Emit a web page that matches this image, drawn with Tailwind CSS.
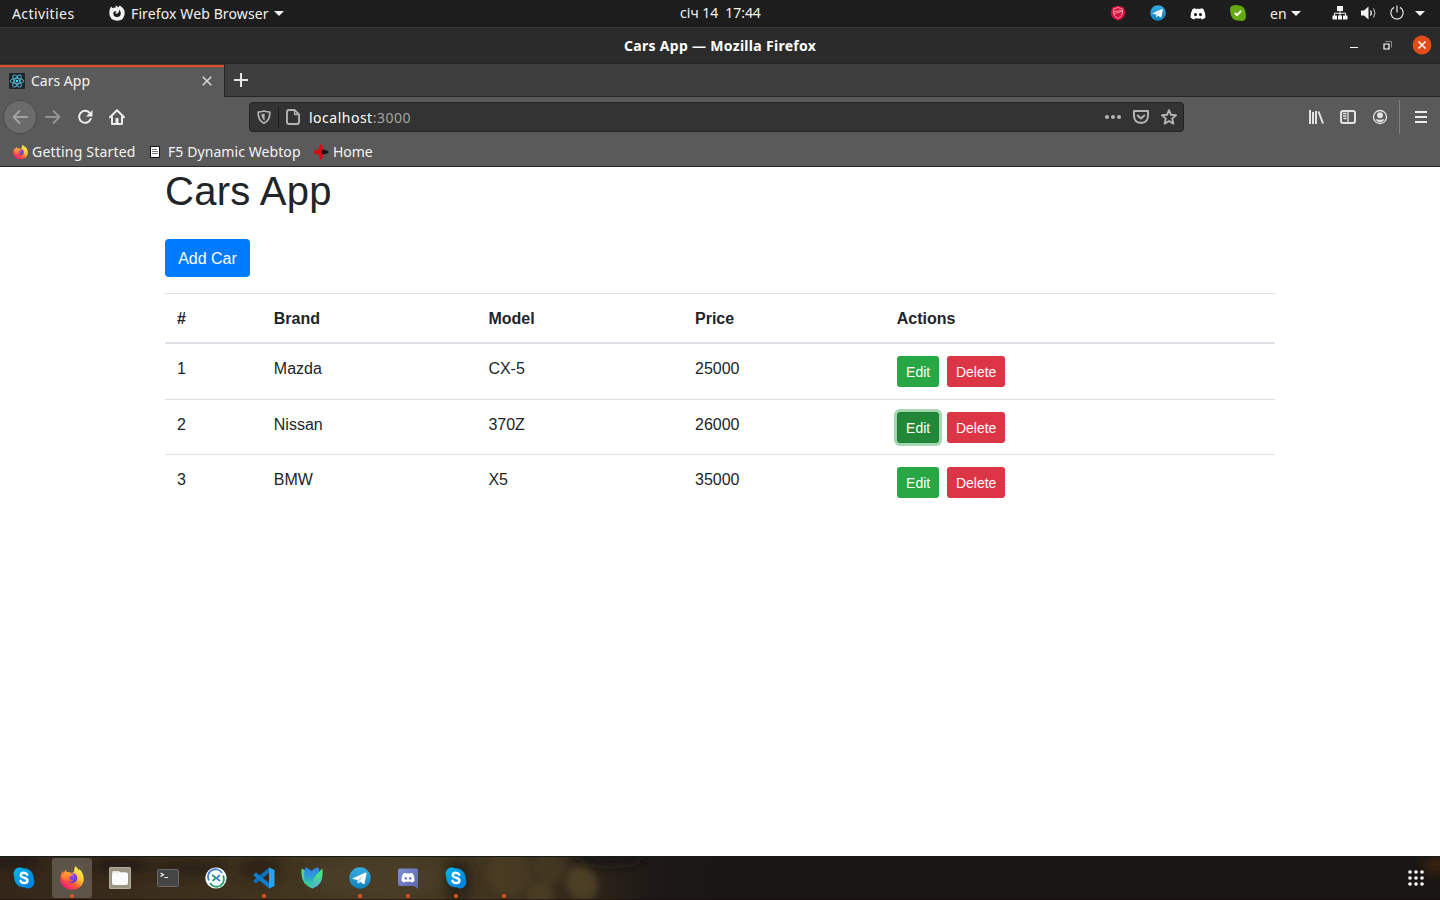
<!DOCTYPE html>
<html lang="en">
<head>
<meta charset="utf-8">
<title>Cars App</title>
<script src="https://cdn.jsdelivr.net/npm/@tailwindcss/browser@4"></script>
</head>
<body class="w-[1440px] h-[900px] overflow-hidden bg-white flex flex-col font-['Noto_Sans',sans-serif] text-[14px] leading-5 whitespace-nowrap">

<!-- Shared gradients and symbols -->
<svg width="0" height="0" class="absolute">
  <defs>
    <linearGradient id="ffBody" x1="0.85" y1="0.1" x2="0.2" y2="0.95"><stop offset="0" stop-color="#fff04a"/><stop offset=".35" stop-color="#ffc52f"/><stop offset=".65" stop-color="#ff5a36"/><stop offset="1" stop-color="#f0197d"/></linearGradient>
    <radialGradient id="ffGlobe" cx=".5" cy=".3" r=".7"><stop offset="0" stop-color="#a14bef"/><stop offset="1" stop-color="#4f3fc4"/></radialGradient>
    <linearGradient id="ffHead" x1="0" y1="0" x2="0" y2="1"><stop offset="0" stop-color="#ffa436"/><stop offset=".5" stop-color="#ff7a30"/><stop offset="1" stop-color="#f5305f"/></linearGradient>
    <linearGradient id="tg" x1="0" y1="0" x2="0" y2="1"><stop offset="0" stop-color="#37aee2"/><stop offset="1" stop-color="#0f82bd"/></linearGradient>
    <linearGradient id="sk" x1="0" y1="0" x2="1" y2="1"><stop offset="0" stop-color="#00b7f0"/><stop offset="1" stop-color="#0078d4"/></linearGradient>
    <linearGradient id="leafA" x1="0" y1="0" x2="0" y2="1"><stop offset="0" stop-color="#2f80f0"/><stop offset=".45" stop-color="#2f9fd0"/><stop offset="1" stop-color="#3fe08a"/></linearGradient>
    <linearGradient id="leafB" x1="0" y1="0" x2="0" y2="1"><stop offset="0" stop-color="#4be37c"/><stop offset="1" stop-color="#38c8a0"/></linearGradient>
    <linearGradient id="leafC" x1="0" y1="0" x2="0" y2="1"><stop offset="0" stop-color="#4be37c"/><stop offset=".4" stop-color="#4bdc8c"/><stop offset="1" stop-color="#5aa8f0"/></linearGradient>
    <linearGradient id="dc" x1="0" y1="0" x2="1" y2="1"><stop offset="0" stop-color="#7f8fd0"/><stop offset="1" stop-color="#5a63b0"/></linearGradient>
  </defs>
  <symbol id="firefox" viewBox="0 0 24 24">
    <path fill="url(#ffBody)" d="M15.500.300c2.200 1.500 3 3.400 3.400 4.600 0-.8.100-1.500.2-2 2.700 2 4.700 5.800 4.600 10.300C23.600 19.300 18.600 23.700 12 23.700 5.500 23.700.5 19.300.3 13.200c0-3.200 1-6.200 2.700-8.100.1 1 .2 1.500.5 2C4.100 5.700 5.200 4.600 6.200 4c-.1 1 .1 1.800.6 2.500 1-.3 2.300-.3 3.300.1C11.400 7 14 6.800 14 5.200c.1-1.700.6-3.600 1.500-4.900z"/>
    <circle cx="12.300" cy="12" r="5" fill="url(#ffGlobe)"/>
    <path fill="url(#ffHead)" d="M1.300 9.500C2.500 8 5 6.400 7.500 6.500c1.500 0 2.400.8 3.500 1.100 1 .2 2.200.2 3.200.2-1 1.500-2.700 1.900-3.600 2.300-1.300.6-1.500 1.900-.8 2.900.8 1.100 2.200 1.300 3.600.9-1.200 1.700-3.400 2-5 1 .8 1.500 2.500 2.300 4.200 2.200C7 19.500 2 15 1.300 9.500z"/>
  </symbol>
  <symbol id="skype" viewBox="0 0 22 22">
    <path fill="url(#sk)" d="M6.500.5C8 .5 9 1 9.800 1.300c6-.6 11.200 4.200 10.800 10.200C22.800 16 20 21.500 15.500 21.500c-1.400 0-2.500-.4-3.400-.9C6 21 1 16.300 1.300 10.300-.8 5.800 2 .5 6.500.5z"/>
    <path fill="none" stroke="#fff" stroke-width="2.500" stroke-linecap="round" d="M14.200 7.700c-.7-1.300-2-1.900-3.400-1.900-1.700 0-3 .9-3 2.400 0 3.300 6.600 1.900 6.600 5.300 0 1.700-1.500 2.600-3.300 2.600-1.600 0-3-.7-3.600-2.200"/>
  </symbol>
  <symbol id="telegram" viewBox="0 0 22 22">
    <circle cx="11" cy="11" r="10.700" fill="url(#tg)"/>
    <path fill="#fff" d="M3.800 11.200 16.600 5.600c.6-.2 1 .1.900.8l-1.900 10c-.1.700-.7.900-1.300.5l-3.100-2.200-1.700 1.700c-.4.300-.8.100-.8-.4l-.2-3-4.600-1.100c-.6-.2-.6-.5-.1-.7z"/>
    <path fill="#bcd9ea" d="m8.500 13 6.600-4.900-4.600 5.800-1.400 2.700z"/>
  </symbol>
  <symbol id="discord" viewBox="0 0 16 12">
    <path fill-rule="evenodd" d="M5.200.3 5.700 1q2.300-.4 4.600 0l.5-.7q1.500.1 2.700.9 2.200 3.800 2 8.300-1.500 1.700-3.700 2l-.9-1.300q-2.900.8-5.800 0l-.9 1.300q-2.200-.3-3.700-2-.2-4.500 2-8.300Q3.700.4 5.200.3zM5.500 5a1.500 1.600 0 1 0 .01 0zM10.500 5a1.500 1.600 0 1 0 .01 0z"/>
  </symbol>
</svg>

<!-- GNOME top bar -->
<header class="h-[28px] shrink-0 bg-[#1d1d1d] border-b border-[#3b3b3b] flex items-center text-[#f2f2f2]">
  <div class="w-[680px] flex items-center pl-3">
    <span class="w-[97px] tracking-[0.42px]">Activities</span>
    <svg class="w-4 h-4 -mt-px" viewBox="0 0 16 16"><path fill="#f2f2f2" fill-rule="evenodd" d="M2 1.500 3.600 3.200Q5 2.300 7 2.600L6.300.4Q8.500.8 9.300 2.500L10.600.6Q15.700 3 15.700 8.300 15.500 15.600 8 15.700.6 15.400.3 8.300.3 4.200 2 1.500zM5 6.500Q3.600 8.300 4.800 10.400 6 12.200 8.300 12q3.500-.4 3.500-3.800Q11.700 6 10 4.800 10.500 7 8.900 8.300 7.200 9.200 6 8 6.700 7.300 7.800 6.900 6.600 5.900 5 6.500z"/></svg>
    <span class="w-[143px] ml-[6px] tracking-[0.12px]">Firefox Web Browser</span>
    <svg class="w-[10px] h-[5px]" viewBox="0 0 10 5"><path fill="#f2f2f2" d="M0 0h10L5 5z"/></svg>
  </div>
  <span class="w-[81px] whitespace-pre -mt-[2px] tracking-[-0.05px]">січ 14  17:44</span>
  <div class="ml-[349px] flex items-center">
    <svg class="w-4 h-4 -mt-px" viewBox="0 0 16 16"><path fill="#d4123e" d="M8 .5 13.800 2.500 15.300 8q-1 6-7.300 7.500Q1.800 14 .7 8l1.500-5.500z"/><path fill="none" stroke="#ff8fa5" d="M8 2.500 12.500 4v4Q12 11.500 8 13.500 4 11.500 3.500 8V4zM4 8.500l8-2M4 6.500l8-1"/></svg>
    <svg class="w-4 h-4 ml-6 -mt-[2px]"><use href="#telegram"/></svg>
    <svg class="w-4 h-3 ml-6" fill="#fff"><use href="#discord"/></svg>
    <svg class="w-4 h-4 ml-6 -mt-px" viewBox="0 0 16 16"><path fill="#65a911" d="M5 0q1.500 0 2.500.2 7.500.1 8 7.600Q16.400 11 15.500 14q-2 2.500-5 1.700Q1 16 .5 8-.5 4 .8 1.500 2.700 0 5 0z"/><path d="m4.800 8 2.300 2.200 4-4.300" fill="none" stroke="#fff" stroke-width="1.900"/></svg>
    <span class="w-[21px] ml-6">en</span>
    <svg class="w-[10px] h-[5px]" viewBox="0 0 10 5"><path fill="#f2f2f2" d="M0 0h10L5 5z"/></svg>
    <svg class="w-4 h-4 ml-[31px] -mt-[2px]" viewBox="0 0 16 16" fill="#f2f2f2"><path d="M5 1h6v5H5zM.5 10.500h4.500v4H.5zM6 10.500h4v4H6zM11 10.500h4.500v4H11zM7.500 6h1v4.500h-1zM2 7.700h12v1H2zM2 8h1v2.500H2zM13 8h1v2.500h-1z"/></svg>
    <svg class="w-4 h-4 ml-[13px] -mt-px" viewBox="0 0 16 16" fill="none" stroke="#f2f2f2"><path fill="#f2f2f2" stroke="none" d="M0 5.500h3l4.500-4v13l-4.500-4H0z"/><path d="M9.500 5.500q1.700 2.500 0 5" stroke-width="1.300"/><path d="M12.500 3.500q3 4.500 0 9" stroke="#ccc"/></svg>
    <svg class="w-4 h-4 ml-3 -mt-[2px]" viewBox="0 0 16 16" fill="none" stroke="#e8e8e8" stroke-width="1.200"><path d="M5 2.400a6.200 6.200 0 1 0 6 0M8 .5v7"/></svg>
    <svg class="w-[10px] h-[5px] ml-[10px]" viewBox="0 0 10 5"><path fill="#f2f2f2" d="M0 0h10L5 5z"/></svg>
  </div>
</header>

<!-- Window title bar -->
<div class="h-[36px] shrink-0 bg-[#2b2b2b] border-b border-[#212121] flex items-center text-white">
  <span class="w-[192px] ml-[624px] font-bold tracking-[0.3px]">Cars App — Mozilla Firefox</span>
  <span class="w-2 h-px bg-white ml-[534px] mt-[3px]"></span>
  <svg class="w-[9px] h-[9px] ml-[25px] -mt-px" viewBox="0 0 9 9" fill="none"><path d="M2.500.5h6v6" stroke="#888"/><path d="M1 3h5v5H1z" stroke="#fff" stroke-width="1.200"/></svg>
  <svg class="w-5 h-5 ml-5 -mt-px" viewBox="0 0 20 20"><circle cx="10" cy="10" r="9.400" fill="#e34b18"/><path d="m6.500 6.500 7 7m0-7-7 7" stroke="#fff" stroke-width="1.500"/></svg>
</div>

<!-- Tabs -->
<div class="h-[33px] shrink-0 bg-[#3e3e3e] flex text-[#f4f4f4]">
  <div class="w-[224px] bg-[#5a5a5a] border-t border-t-[#3a3a3a]">
    <div class="h-8 border-t-2 border-[#e34f1e] flex items-center pl-[9px]">
      <svg class="w-4 h-4 -mt-[2px]" viewBox="0 0 16 16" fill="none" stroke="#53b9d1" stroke-width=".9"><rect width="16" height="16" rx="1" fill="#20232a" stroke="none"/><ellipse cx="8" cy="8" rx="6.800" ry="2.600"/><ellipse cx="8" cy="8" rx="6.800" ry="2.600" transform="rotate(60 8 8)"/><ellipse cx="8" cy="8" rx="6.800" ry="2.600" transform="rotate(120 8 8)"/><circle cx="8" cy="8" r="1.200" fill="#61dafb" stroke="none"/></svg>
      <span class="w-[171px] ml-[6px] -mt-[2px]">Cars App</span>
      <svg class="w-[10px] h-[10px] -mt-[2px]" viewBox="0 0 10 10"><path d="m.7.7 8.600 8.600m0-8.600L.7 9.300" stroke="#d6d6d6" stroke-width="1.600"/></svg>
    </div>
  </div>
  <div class="flex-1 border-l border-b border-[#272727] pl-[9px] pt-[9px]">
    <svg class="w-[14px] h-[14px]" viewBox="0 0 14 14"><path d="M7 0v14M0 7h14" stroke="#e6e6e6" stroke-width="2"/></svg>
  </div>
</div>

<!-- Navigation toolbar -->
<div class="h-10 shrink-0 bg-[#5a5a5a] flex items-center">
  <div class="ml-[3px] w-[34px] h-[34px] rounded-full bg-[#6b6b6b] border border-[#4b4b4b] flex items-center justify-center">
    <svg class="w-4 h-4" viewBox="0 0 16 16" fill="none" stroke="#a2a2a2" stroke-width="2" stroke-linecap="round" stroke-linejoin="round"><path d="M15 8H1.500m6-6-6 6 6 6"/></svg>
  </div>
  <svg class="w-4 h-4 ml-[8px]" viewBox="0 0 16 16" fill="none" stroke="#929292" stroke-width="2" stroke-linecap="round" stroke-linejoin="round"><path d="M1 8h13.500m-6-6 6 6-6 6"/></svg>
  <svg class="w-4 h-4 ml-4" viewBox="0 0 16 16" fill="none" stroke="#ededed" stroke-width="2" stroke-linecap="round"><path d="M12.500 3.700A6 6 0 1 0 13.700 10"/><path d="M15.500 1v6.500H9z" fill="#ededed" stroke="none"/></svg>
  <svg class="w-4 h-4 ml-4" viewBox="0 0 16 16" fill="none" stroke="#ededed" stroke-width="2" stroke-linejoin="round" stroke-linecap="round"><path d="M1 8.200 8 1.300l7 6.900M3 8v7h10V8"/><path d="M6.500 15V9h3v6z" fill="#ededed" stroke="none"/></svg>
  <div class="ml-[124px] w-[935px] h-[30px] rounded-[4px] bg-[#333] border border-[#222] flex items-center">
    <svg class="w-[14px] h-[14px] ml-[7px]" viewBox="0 0 14 14" fill="none" stroke="#b4b4b4" stroke-width="1.700"><path d="M7 1Q10 2 12.800 2q.3 8.500-5.800 11.200Q.9 10.500 1.200 2 4 2 7 1z" stroke-linejoin="round"/><path d="M7.600 3.600v7.200Q4.500 8.500 4.300 4.300z" fill="#b4b4b4" stroke="none"/></svg>
    <span class="ml-[7px] w-px h-[22px] bg-[#222]"></span>
    <svg class="w-[14px] h-4 ml-[7px]" viewBox="0 0 14 16" fill="none" stroke="#b4b4b4" stroke-width="1.900" stroke-linejoin="round"><path d="M3 1h5.500L13 5.500V13q0 2-2 2H3q-2 0-2-2V3q0-2 2-2z"/><path d="M8.500 1v4.500H13" stroke-width="1.300"/></svg>
    <span class="w-[796px] ml-[9px] mt-[2px] text-white tracking-[0.5px]">localhost<span class="text-[#a4a4a4]">:3000</span></span>
    <svg class="w-4 h-4" viewBox="0 0 16 16" fill="#b4b4b4"><circle cx="2" cy="8" r="2"/><circle cx="8" cy="8" r="2"/><circle cx="14" cy="8" r="2"/></svg>
    <svg class="w-4 h-4 ml-3" viewBox="0 0 16 16" fill="none" stroke="#b4b4b4" stroke-width="2" stroke-linejoin="round" stroke-linecap="round"><path d="M1 2h14v5q-.4 6.800-7 7Q1.400 13.800 1 7z"/><path d="m4.700 6.500 3.300 3 3.300-3"/></svg>
    <svg class="w-4 h-4 ml-3" viewBox="0 0 16 16" fill="none" stroke="#b4b4b4" stroke-width="1.900" stroke-linejoin="round"><path d="m8 1.200 2 4.600 5 .5-3.800 3.300 1.200 5L8 12l-4.400 2.600 1.200-5L1 6.300l5-.5z"/></svg>
  </div>
  <svg class="w-4 h-4 ml-[124px]" viewBox="0 0 16 16" stroke="#e2e2e2" stroke-width="2"><path d="M2 1v14M5 3v12M8 2v13M10.500 2.500 15 14.500"/></svg>
  <svg class="w-4 h-4 ml-4" viewBox="0 0 16 16" fill="none" stroke="#e2e2e2"><rect x="1" y="2" width="14" height="12" rx="2" stroke-width="2"/><path d="M8 2v12" stroke-width="1.300"/><path d="M3 4.500h3.500M3 7h3.500M3.500 9.500h3" stroke-width="1.300"/></svg>
  <svg class="w-4 h-4 ml-4" viewBox="0 0 16 16" fill="#e2e2e2"><circle cx="8" cy="8" r="6.500" fill="none" stroke="#e2e2e2" stroke-width="1.300"/><circle cx="8" cy="6.200" r="3"/><path d="M3.500 10q2 .8 4.500.8t4.500-.8q-1 3-4.500 3.300Q4.500 13 3.500 10z"/></svg>
  <span class="ml-[11px] w-px h-[34px] bg-[#7d7d7d]"></span>
  <svg class="w-3 h-3 ml-[15px]" viewBox="0 0 12 12"><path d="M0 1h12M0 6h12M0 11h12" stroke="#ededed" stroke-width="2"/></svg>
</div>

<!-- Bookmarks toolbar -->
<div class="h-[30px] shrink-0 bg-[#5a5a5a] border-b border-[#242424] flex items-center text-[#f4f4f4]">
  <svg class="w-[15px] h-4 ml-[13px]"><use href="#firefox"/></svg>
  <span class="w-[118px] ml-1 tracking-[0.2px]">Getting Started</span>
  <svg class="w-[10px] h-3" viewBox="0 0 10 12"><path fill="#fff" stroke="#111" d="M.5.500h9v11h-9z"/><path d="M2 3.500h5M2 5.500h6M2 7.500h6" stroke="#777"/></svg>
  <span class="w-[146px] ml-[8px] tracking-[0.08px]">F5 Dynamic Webtop</span>
  <svg class="w-4 h-4 -ml-px" viewBox="0 0 16 16"><path fill="#e30613" d="M8 .3q1.700.7 2 5.200L8 8l2 2.500q-.3 4.500-2 5.200-1.700-.7-2-5.200Q1.500 10 .3 8 1.500 6 6 5.500 6.300 1 8 .3z"/><path fill="#161616" d="M8 8l2-2.500q4.500.5 5.700 2.500-1.200 2-5.700 2.500z"/></svg>
  <span class="ml-1 tracking-[-0.1px]">Home</span>
</div>

<!-- Page content -->
<main class="h-[689px] shrink-0 bg-white text-[#212529] font-['Liberation_Sans',Arial,sans-serif] text-base leading-6">
  <div class="w-[1110px] mx-auto">
    <h1 class="text-[40px] leading-[48px] font-medium tracking-[0.28px]">Cars App</h1>
    <button class="block mt-6 w-[85px] h-[38px] pt-[2px] rounded-[4px] bg-[#007bff] text-white">Add Car</button>
    <div class="mt-4">
      <div class="grid grid-cols-[96.800px_214.600px_206.600px_201.700px_1fr] h-[51px] pl-3 pt-[13px] border-t border-b-2 border-b-[#dee2e6] border-t-[#dee2e6] font-bold">
        <span>#</span><span>Brand</span><span>Model</span><span>Price</span><span>Actions</span>
      </div>
      <div class="grid grid-cols-[96.800px_214.600px_206.600px_201.700px_1fr] h-[55px] pl-3 pt-[13px]">
        <span>1</span><span>Mazda</span><span>CX-5</span><span>25000</span>
        <div class="-mt-px flex items-start gap-2 text-sm text-white"><button class="w-[42px] h-[31px] pl-px rounded-[3px] bg-[#28a745]">Edit</button><button class="w-[58px] h-[31px] pl-px rounded-[3px] bg-[#dc3545]">Delete</button></div>
      </div>
      <div class="grid grid-cols-[96.800px_214.600px_206.600px_201.700px_1fr] h-[55px] pl-3 pt-[13px] border-t border-[#dee2e6]">
        <span>2</span><span>Nissan</span><span>370Z</span><span>26000</span>
        <div class="-mt-px flex items-start gap-2 text-sm text-white"><button class="w-[42px] h-[31px] pl-px rounded-[3px] bg-[#218838] border border-[#1e7e34] shadow-[0_0_0_3px_#a3d8b0]">Edit</button><button class="w-[58px] h-[31px] pl-px rounded-[3px] bg-[#dc3545]">Delete</button></div>
      </div>
      <div class="grid grid-cols-[96.800px_214.600px_206.600px_201.700px_1fr] h-[55px] pl-3 pt-[13px] border-t border-[#dee2e6]">
        <span>3</span><span>BMW</span><span>X5</span><span>35000</span>
        <div class="-mt-px flex items-start gap-2 text-sm text-white"><button class="w-[42px] h-[31px] pl-px rounded-[3px] bg-[#28a745]">Edit</button><button class="w-[58px] h-[31px] pl-px rounded-[3px] bg-[#dc3545]">Delete</button></div>
      </div>
    </div>
  </div>
</main>

<!-- Dock over a dim bokeh wallpaper -->
<footer class="relative h-11 shrink-0 bg-[#191615] overflow-hidden">
  <svg class="absolute inset-0 w-[1440px] h-11" viewBox="0 0 1440 44">
    <defs>
      <linearGradient id="wall"><stop offset="0" stop-color="#33271a"/><stop offset=".08" stop-color="#382b1b"/><stop offset=".2" stop-color="#41351f"/><stop offset=".3" stop-color="#443822"/><stop offset=".35" stop-color="#40341f"/><stop offset=".38" stop-color="#382d1d"/><stop offset=".41" stop-color="#2e251a"/><stop offset=".45" stop-color="#1e1916"/><stop offset=".5" stop-color="#191615"/><stop offset="1" stop-color="#191615"/></linearGradient>
      <filter id="soft" x="-50%" y="-50%" width="200%" height="200%"><feGaussianBlur stdDeviation="6"/></filter>
      <filter id="edge" x="-50%" y="-50%" width="200%" height="200%"><feGaussianBlur stdDeviation="3"/></filter>
    </defs>
    <rect width="1440" height="44" fill="url(#wall)"/>
    <g filter="url(#soft)">
      <ellipse cx="15" cy="5" rx="26" ry="9" fill="#251c14"/><ellipse cx="120" cy="10" rx="30" ry="9" fill="#281f16"/><ellipse cx="190" cy="12" rx="40" ry="8" fill="#2c2218"/><ellipse cx="260" cy="12" rx="22" ry="12" fill="#2d2319"/><ellipse cx="375" cy="22" rx="70" ry="22" fill="#4a3e26"/><ellipse cx="458" cy="25" rx="14" ry="22" fill="#2b2218"/><ellipse cx="610" cy="0" rx="34" ry="9" fill="#191615"/><ellipse cx="1438" cy="8" rx="16" ry="10" fill="#38230f"/>
    </g>
    <g filter="url(#edge)" fill="#54462a"><ellipse cx="582" cy="28" rx="15" ry="18" opacity=".75" transform="rotate(-25 582 28)"/><circle cx="540" cy="39" r="13" opacity=".6"/><circle cx="510" cy="18" r="22" opacity=".4"/><circle cx="550" cy="12" r="16" opacity=".4"/></g>
    <path d="M0 .5h1440" stroke="#161b16"/><path d="M0 43.500h1440" stroke="#1c0d10" opacity=".6"/>
  </svg>
  <nav class="relative h-11 flex items-center pl-1">
    <div class="w-12 h-11 pr-2 flex items-center justify-center"><svg class="w-[22px] h-[22px]"><use href="#skype"/></svg></div>
    <div class="w-10 h-10 mr-2 rounded-[3px] bg-white/20 flex items-center justify-center relative"><svg class="w-6 h-6"><use href="#firefox"/></svg><i class="absolute bottom-0 left-[18px] w-1 h-1 rounded-full bg-[#e9541f]"></i></div>
    <div class="w-12 h-11 pr-2 flex items-center justify-center"><svg class="w-[22px] h-[22px]" viewBox="0 0 22 22"><rect width="22" height="22" rx="1.500" fill="#9b9483"/><rect x=".5" y=".5" width="21" height="21" rx="1.500" fill="none" stroke="#b4ad9c"/><path fill="#e6e2d9" d="M3 6V5.500Q3 4 4.500 4H10l1.500 1.500H17q2 0 2 2z"/><rect x="3" y="5.500" width="16" height="12.500" rx="2" fill="#fafafa"/></svg></div>
    <div class="w-12 h-11 pr-2 flex items-center justify-center"><svg class="w-[22px] h-[18px]" viewBox="0 0 22 18"><rect x=".5" y=".5" width="21" height="17" rx="1" fill="#454545" stroke="#6b6b6b"/><path d="m3.500 4 3 1.700-3 1.700M7.500 8.500H11" fill="none" stroke="#fff" stroke-width="1.100"/></svg></div>
    <div class="w-12 h-11 pr-2 flex items-center justify-center"><svg class="w-[22px] h-[22px]" viewBox="0 0 22 22" fill="none"><circle cx="11" cy="11" r="10.600" fill="#fff"/><path d="M4 13.500A7.500 7.500 0 0 1 17 6" stroke="#3f82d6" stroke-width="1.800"/><path d="M18 8.500A7.500 7.500 0 0 1 5 16" stroke="#1ba06a" stroke-width="1.800"/><path d="M7 8l4 2.800L7.500 14" stroke="#1c9a6b" stroke-width="1.800"/><path d="M15 14l-3.500-2.800L15 8" stroke="#3f82d6" stroke-width="1.800"/></svg></div>
    <div class="w-12 h-11 pr-2 flex items-center justify-center relative"><svg class="w-[22px] h-[22px]" viewBox="0 0 22 22"><path fill="#0a6fb8" d="m15.800.7 1 4.800L3 16.500l-2.500-2 .2-1.200z"/><path fill="#0b7dcb" d="m3 5.500 13.800 11-1 4.800L.7 8.700.5 7.500z"/><path fill="#2ba3f0" d="M16 .5 21.500 3v16L16 21.500z"/></svg><i class="absolute bottom-[2px] left-[18px] w-1 h-1 rounded-full bg-[#e9541f]"></i></div>
    <div class="w-12 h-11 pr-2 flex items-center justify-center"><svg class="w-[22px] h-[22px]" viewBox="0 0 22 22"><path fill="url(#leafB)" d="M.7 1.500Q4 2.500 6 6l5.500 15.500Q-1.500 17 .7 1.500z"/><path fill="url(#leafA)" d="M4.500.3Q8 1.500 10.500 4 13.500 1 17.500.3 19 4 18 9 15.500 16 11.500 21.500 2.500 18 3 8 3.300 3.500 4.500.3z"/><path fill="url(#leafC)" d="M21.300 1.500Q23.500 17.500 11.500 21.500 11.500 10 17.500 5.500 19.500 3.500 21.300 1.500z"/></svg></div>
    <div class="w-12 h-11 pr-2 flex items-center justify-center relative"><svg class="w-[22px] h-[22px]"><use href="#telegram"/></svg><i class="absolute bottom-[2px] left-[18px] w-1 h-1 rounded-full bg-[#e9541f]"></i></div>
    <div class="w-12 h-11 pr-2 flex items-center justify-center relative"><svg class="w-5 h-[21px]" viewBox="0 0 20 21"><path fill="url(#dc)" d="M2 .5h16q2 0 2 2V21l-4-3H2q-2 0-2-2V2.500q0-2 2-2z"/><use href="#discord" x="3" y="4.500" width="14" height="10.500" fill="#fff"/></svg><i class="absolute bottom-[2px] left-[18px] w-1 h-1 rounded-full bg-[#e9541f]"></i></div>
    <div class="w-12 h-11 pr-2 flex items-center justify-center relative"><svg class="w-[22px] h-[22px]"><use href="#skype"/></svg><i class="absolute bottom-[2px] left-[18px] w-1 h-1 rounded-full bg-[#e9541f]"></i></div>
    <div class="w-12 h-11 relative"><i class="absolute bottom-[2px] left-[18px] w-1 h-1 rounded-full bg-[#e9541f]"></i></div>
    <svg class="w-4 h-4 ml-auto mr-4" viewBox="0 0 16 16" fill="#fff"><circle cx="2" cy="2" r="1.800"/><circle cx="8" cy="2" r="1.800"/><circle cx="14" cy="2" r="1.800"/><circle cx="2" cy="8" r="1.800"/><circle cx="8" cy="8" r="1.800"/><circle cx="14" cy="8" r="1.800"/><circle cx="2" cy="14" r="1.800"/><circle cx="8" cy="14" r="1.800"/><circle cx="14" cy="14" r="1.800"/></svg>
  </nav>
</footer>
</body>
</html>
